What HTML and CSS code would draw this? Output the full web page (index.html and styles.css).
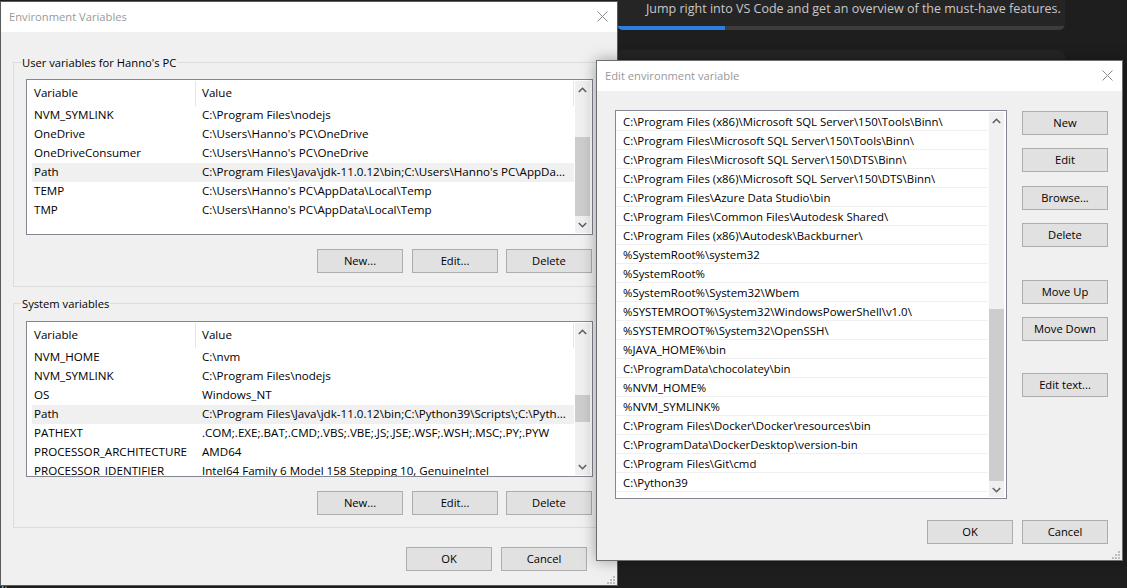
FILE: index.html
```html
<!DOCTYPE html>
<html lang="en">
<head>
  <meta charset="UTF-8">
  <title>Environment Variables</title>
  <link rel="stylesheet" href="styles.css">
</head>
<body>
  <div class="vscode">
    <div class="walk-card">
      <p class="walk-text">Jump right into VS Code and get an overview of the must-have features.</p>
      <div class="walk-track"><div class="walk-fill"></div></div>
    </div>
    <div class="walk-card-next"></div>
    <span class="behind-text">Item</span>
  </div>

  <div class="window env-window">
    <div class="titlebar">
      <span>Environment Variables</span>
      <svg class="close" width="11" height="11" viewBox="0 0 11 11"><path d="M.5.5l10 10M10.5.5l-10 10"/></svg>
    </div>
    <div class="env-body">
      <div class="group user-group">
        <span class="group-title">User variables for Hanno's PC</span>
        <div class="list">
          <div class="list-main">
            <div class="row head"><span class="c1">Variable</span><span class="c2">Value</span></div>
            <div class="row"><span class="c1">NVM_SYMLINK</span><span class="c2">C:\Program Files\nodejs</span></div>
            <div class="row"><span class="c1">OneDrive</span><span class="c2">C:\Users\Hanno's PC\OneDrive</span></div>
            <div class="row"><span class="c1">OneDriveConsumer</span><span class="c2">C:\Users\Hanno's PC\OneDrive</span></div>
            <div class="row selected"><span class="c1">Path</span><span class="c2">C:\Program Files\Java\jdk-11.0.12\bin;C:\Users\Hanno's PC\AppDa...</span></div>
            <div class="row"><span class="c1">TEMP</span><span class="c2">C:\Users\Hanno's PC\AppData\Local\Temp</span></div>
            <div class="row"><span class="c1">TMP</span><span class="c2">C:\Users\Hanno's PC\AppData\Local\Temp</span></div>
          </div>
          <div class="scrollbar">
            <div class="sb-btn"><svg width="9" height="6" viewBox="0 0 9 6"><path d="M.8 5L4.5 1.3 8.2 5"/></svg></div>
            <div class="sb-track"><div class="sb-thumb user-thumb"></div></div>
            <div class="sb-btn"><svg width="9" height="6" viewBox="0 0 9 6"><path d="M.8 1L4.5 4.7 8.2 1"/></svg></div>
          </div>
        </div>
        <div class="btn-row">
          <button class="btn">New...</button>
          <button class="btn">Edit...</button>
          <button class="btn">Delete</button>
        </div>
      </div>

      <div class="group system-group">
        <span class="group-title">System variables</span>
        <div class="list">
          <div class="list-main">
            <div class="row head"><span class="c1">Variable</span><span class="c2">Value</span></div>
            <div class="row"><span class="c1">NVM_HOME</span><span class="c2">C:\nvm</span></div>
            <div class="row"><span class="c1">NVM_SYMLINK</span><span class="c2">C:\Program Files\nodejs</span></div>
            <div class="row"><span class="c1">OS</span><span class="c2">Windows_NT</span></div>
            <div class="row selected"><span class="c1">Path</span><span class="c2">C:\Program Files\Java\jdk-11.0.12\bin;C:\Python39\Scripts\;C:\Pyth...</span></div>
            <div class="row"><span class="c1">PATHEXT</span><span class="c2">.COM;.EXE;.BAT;.CMD;.VBS;.VBE;.JS;.JSE;.WSF;.WSH;.MSC;.PY;.PYW</span></div>
            <div class="row"><span class="c1">PROCESSOR_ARCHITECTURE</span><span class="c2">AMD64</span></div>
            <div class="row"><span class="c1">PROCESSOR_IDENTIFIER</span><span class="c2">Intel64 Family 6 Model 158 Stepping 10, GenuineIntel</span></div>
          </div>
          <div class="scrollbar">
            <div class="sb-btn"><svg width="9" height="6" viewBox="0 0 9 6"><path d="M.8 5L4.5 1.3 8.2 5"/></svg></div>
            <div class="sb-track"><div class="sb-thumb system-thumb"></div></div>
            <div class="sb-btn"><svg width="9" height="6" viewBox="0 0 9 6"><path d="M.8 1L4.5 4.7 8.2 1"/></svg></div>
          </div>
        </div>
        <div class="btn-row">
          <button class="btn">New...</button>
          <button class="btn">Edit...</button>
          <button class="btn">Delete</button>
        </div>
      </div>

      <div class="env-footer">
        <button class="btn">OK</button>
        <button class="btn">Cancel</button>
      </div>
    </div>
    <svg class="grip" width="8" height="8" viewBox="0 0 8 8"><path d="M6 0h2v2H6zM3 3h2v2H3zM6 3h2v2H6zM0 6h2v2H0zM3 6h2v2H3zM6 6h2v2H6z"/></svg>
  </div>

  <div class="window edit-window">
    <div class="titlebar">
      <span>Edit environment variable</span>
      <svg class="close" width="11" height="11" viewBox="0 0 11 11"><path d="M.5.5l10 10M10.5.5l-10 10"/></svg>
    </div>
    <div class="edit-body">
      <div class="edit-top">
        <div class="path-list">
          <div class="path-rows">
            <div class="path-row">C:\Program Files (x86)\Microsoft SQL Server\150\Tools\Binn\</div>
            <div class="path-row">C:\Program Files\Microsoft SQL Server\150\Tools\Binn\</div>
            <div class="path-row">C:\Program Files\Microsoft SQL Server\150\DTS\Binn\</div>
            <div class="path-row">C:\Program Files (x86)\Microsoft SQL Server\150\DTS\Binn\</div>
            <div class="path-row">C:\Program Files\Azure Data Studio\bin</div>
            <div class="path-row">C:\Program Files\Common Files\Autodesk Shared\</div>
            <div class="path-row">C:\Program Files (x86)\Autodesk\Backburner\</div>
            <div class="path-row">%SystemRoot%\system32</div>
            <div class="path-row">%SystemRoot%</div>
            <div class="path-row">%SystemRoot%\System32\Wbem</div>
            <div class="path-row">%SYSTEMROOT%\System32\WindowsPowerShell\v1.0\</div>
            <div class="path-row">%SYSTEMROOT%\System32\OpenSSH\</div>
            <div class="path-row">%JAVA_HOME%\bin</div>
            <div class="path-row">C:\ProgramData\chocolatey\bin</div>
            <div class="path-row">%NVM_HOME%</div>
            <div class="path-row">%NVM_SYMLINK%</div>
            <div class="path-row">C:\Program Files\Docker\Docker\resources\bin</div>
            <div class="path-row">C:\ProgramData\DockerDesktop\version-bin</div>
            <div class="path-row">C:\Program Files\Git\cmd</div>
            <div class="path-row">C:\Python39</div>
          </div>
          <div class="scrollbar path-scroll">
            <div class="sb-btn"><svg width="9" height="6" viewBox="0 0 9 6"><path d="M.8 5L4.5 1.3 8.2 5"/></svg></div>
            <div class="sb-track"><div class="sb-thumb path-thumb"></div></div>
            <div class="sb-btn"><svg width="9" height="6" viewBox="0 0 9 6"><path d="M.8 1L4.5 4.7 8.2 1"/></svg></div>
          </div>
        </div>
        <div class="side-btns">
          <button class="btn">New</button>
          <button class="btn">Edit</button>
          <button class="btn browse-btn">Browse...</button>
          <button class="btn">Delete</button>
          <button class="btn spaced-btn">Move Up</button>
          <button class="btn">Move Down</button>
          <button class="btn spaced-btn last-btn">Edit text...</button>
        </div>
      </div>
      <div class="edit-footer">
        <button class="btn">OK</button>
        <button class="btn">Cancel</button>
      </div>
    </div>
    <svg class="grip" width="8" height="8" viewBox="0 0 8 8"><path d="M6 0h2v2H6zM3 3h2v2H3zM6 3h2v2H6zM0 6h2v2H0zM3 6h2v2H3zM6 6h2v2H6z"/></svg>
  </div>
</body>
</html>
```

FILE: styles.css
```css
* {
  box-sizing: border-box;
}

html, body {
  height: 100%;
}

body {
  margin: 0;
  background-color: #1e1e1e;
  font-family: "Open Sans", "Noto Sans", sans-serif;
  font-size: 11.2px;
  color: #000;
  overflow: hidden;
}

/* editor behind the dialogs */
.vscode {
  height: 100%;
  padding-left: 617px;
}

.walk-card {
  width: 448px;
  height: 30px;
  background-color: #252526;
  border-radius: 0 0 6px 6px;
  overflow: hidden;
}

.walk-text {
  margin: 0;
  height: 26px;
  padding: 1px 0 0 29px;
  line-height: 16px;
  font-size: 12.5px;
  color: #c8c8c8;
}

.walk-track {
  height: 4px;
  background-color: #3c3c3c;
}

.walk-fill {
  width: 108px;
  height: 4px;
  background-color: #2b7fe0;
}

.walk-card-next {
  width: 448px;
  height: 40px;
  margin-top: 20px;
  background-color: #252526;
  border-radius: 6px 6px 0 0;
}

.behind-text {
  position: absolute;
  left: 1px;
  top: 582px;
  font-size: 12px;
  color: #9cc4d8;
}

/* dialogs sit on the desktop */
.window {
  position: absolute;
  background-color: #f0f0f0;
  border: 1px solid #5a5a5a;
}

.env-window {
  left: 0;
  top: 1px;
  width: 618px;
  height: 585px;
}

.edit-window {
  left: 596px;
  top: 60px;
  width: 527px;
  height: 501px;
  border-color: #6e6e6e;
  box-shadow: 0 0 14px rgba(0,0,0,0.35);
}

.titlebar {
  display: flex;
  align-items: center;
  justify-content: space-between;
  height: 30px;
  padding: 0 9px 2px 8px;
  background-color: #fff;
  color: #999;
}

.close {
  fill: none;
  stroke: #8c8c8c;
  stroke-width: 1;
}

.grip {
  position: absolute;
  right: 2px;
  bottom: 1px;
  fill: #bcbcbc;
}

.env-body {
  padding: 30px 12px 0;
}

.group {
  position: relative;
  width: 592px;
  padding-left: 12px;
  border: 1px solid #dcdcdc;
}

.user-group {
  padding-top: 16px;
  padding-bottom: 13px;
}

.system-group {
  margin-top: 16px;
  padding-top: 17px;
  padding-bottom: 12px;
}

.group-title {
  position: absolute;
  left: 7px;
  top: -8px;
  padding: 0 1px;
  line-height: 16px;
  background-color: #f0f0f0;
}

.list {
  display: flex;
  width: 567px;
  height: 156px;
  padding: 1px 2px 1px 5px;
  background-color: #fff;
  border: 1px solid #828790;
  font-size: 11.6px;
  overflow: hidden;
}

.list-main {
  width: 542px;
  margin-right: 1px;
}

.row {
  display: grid;
  grid-template-columns: 164px 1fr;
  height: 19px;
  line-height: 17px;
  white-space: nowrap;
}

.row.head {
  height: 25px;
  line-height: 23px;
  border-right: 1px solid #e5e5e5;
}

.row.head .c1 {
  border-right: 1px solid #e5e5e5;
}

.row.selected {
  background-color: #f0f0f0;
}

.c1 {
  padding-left: 2px;
}

.c2 {
  padding-left: 6px;
}

.scrollbar {
  display: flex;
  flex-direction: column;
  flex: none;
  width: 15px;
  height: 100%;
  background-color: #f0f0f0;
}

.sb-btn {
  display: flex;
  flex: none;
  align-items: center;
  justify-content: center;
  height: 17px;
}

.sb-btn svg {
  fill: none;
  stroke: #606060;
  stroke-width: 1.6;
}

.sb-track {
  flex: 1;
}

.sb-thumb {
  background-color: #cdcdcd;
}

.user-thumb {
  height: 79px;
  margin-top: 39px;
}

.system-thumb {
  height: 27px;
  margin-top: 55px;
}

.path-thumb {
  height: 172px;
  margin-top: 180px;
}

.btn-row {
  display: flex;
  justify-content: flex-end;
  gap: 8px;
  width: 566px;
  margin-top: 14px;
}

.btn-row .btn:first-child {
  margin-right: 1px;
}

.btn {
  width: 86px;
  height: 24px;
  padding: 0 0 2px;
  background-color: #e1e1e1;
  border: 1px solid #adadad;
  font: inherit;
  color: #000;
}

.env-footer {
  display: flex;
  justify-content: flex-end;
  gap: 9px;
  margin-top: 19px;
  padding-right: 18px;
}

.edit-body {
  padding: 19px 14px 0 18px;
}

.edit-top {
  display: flex;
}

.path-list {
  display: flex;
  width: 392px;
  height: 389px;
  padding: 1px 2px 1px 0;
  background-color: #fff;
  border: 1px solid #828790;
  font-size: 11.4px;
}

.path-rows {
  width: 372px;
  margin-right: 1px;
}

.path-row {
  height: 19px;
  padding-left: 7px;
  line-height: 19px;
  border-bottom: 1px solid #f0f0f0;
  white-space: nowrap;
}

.side-btns {
  display: flex;
  flex-direction: column;
  gap: 13px;
  margin: 1px 0 0 15px;
}

.browse-btn {
  margin-top: 1px;
}

.spaced-btn {
  margin-top: 20px;
}

.last-btn {
  margin-top: 19px;
}

.edit-footer {
  display: flex;
  justify-content: flex-end;
  gap: 9px;
  margin-top: 21px;
}
```
